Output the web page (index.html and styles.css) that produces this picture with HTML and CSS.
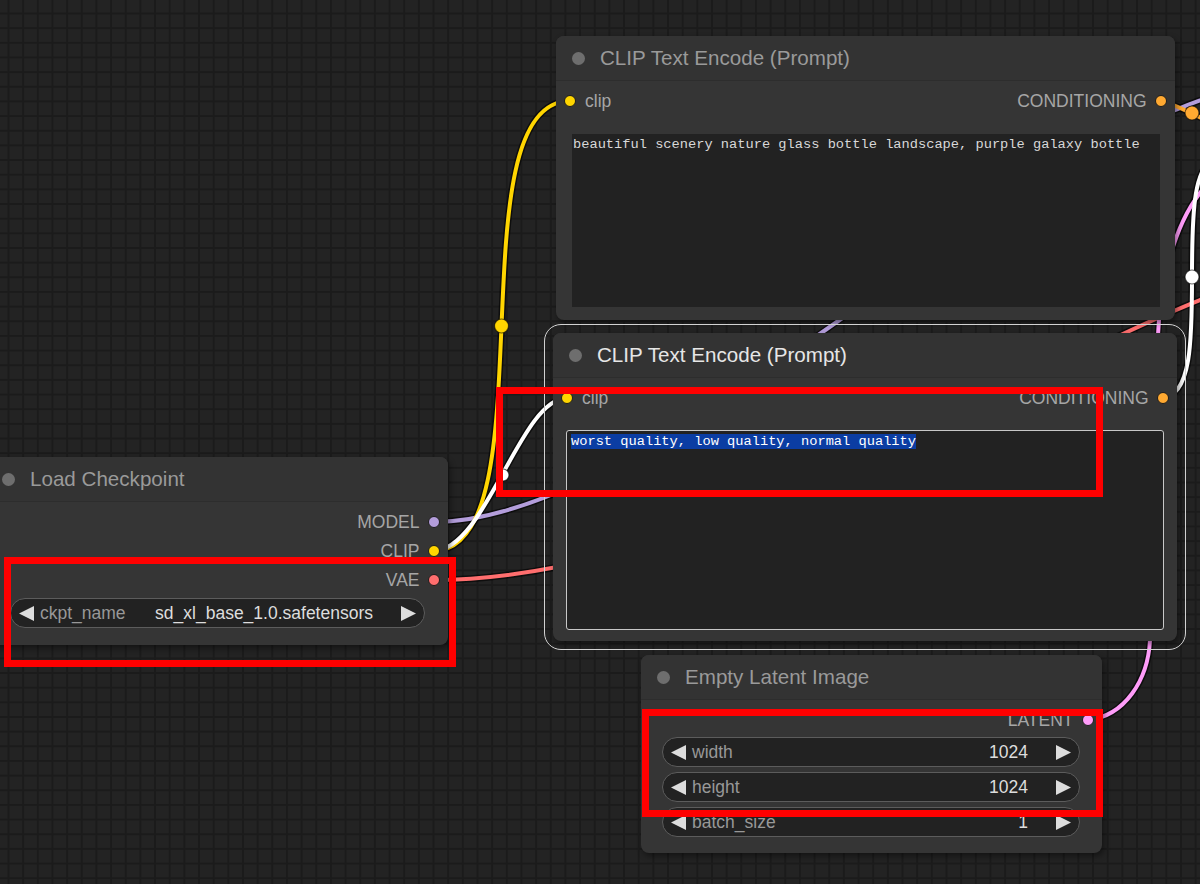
FILE: index.html
```html
<!DOCTYPE html>
<html>
<head>
<meta charset="utf-8">
<title>ComfyUI graph</title>
<link rel="stylesheet" href="styles.css">
</head>
<body>
<div class="canvas">
  <svg class="links" width="1200" height="884" viewBox="0 0 1200 884">
    <g class="link-border">
      <path d="M433,522 C676,522 1057,80 1300,80"/>
      <path d="M433,580 C700,580 1000,380 1200,300 L1260,276"/>
      <path d="M1088,720 C1125,716 1148,680 1150,640 L1158,335 C1160,280 1175,225 1200,193 S1225,165 1240,158"/>
      <path d="M1160,101 C1172,101 1212,126 1224,126"/>
      <path d="M433,551 C551,551 452,101 570,101"/>
      <path d="M433,551 C486,551 520,398 567,398"/>
      <path d="M1161,398 C1223,398 1161,156 1223,156"/>
    </g>
    <g class="link">
      <path stroke="#b39ddb" d="M433,522 C676,522 1057,80 1300,80"/>
      <path stroke="#ff6e6e" d="M433,580 C700,580 1000,380 1200,300 L1260,276"/>
      <path stroke="#ff9cf9" d="M1088,720 C1125,716 1148,680 1150,640 L1158,335 C1160,280 1175,225 1200,193 S1225,165 1240,158"/>
      <path stroke="#ffa931" d="M1160,101 C1172,101 1212,126 1224,126"/>
      <path stroke="#ffd500" d="M433,551 C551,551 452,101 570,101"/>
      <path stroke="#ffffff" d="M433,551 C486,551 520,398 567,398"/>
      <path stroke="#ffffff" d="M1161,398 C1223,398 1161,156 1223,156"/>
    </g>
    <g class="link-dots">
      <circle cx="1192" cy="113" r="7" fill="#ffa931"/>
      <circle cx="501.5" cy="326" r="7" fill="#ffd500"/>
      <circle cx="503" cy="475" r="6" fill="#ffffff"/>
      <circle cx="1192" cy="277" r="7" fill="#ffffff"/>
    </g>
  </svg>

  <div class="node node-prompt-pos">
    <div class="title"><span class="tdot"></span><span class="tname">CLIP Text Encode (Prompt)</span></div>
    <div class="body">
      <div class="slot-row">
        <div class="slot in"><i class="sdot c-clip"></i><span>clip</span></div>
        <div class="slot out"><span>CONDITIONING</span><i class="sdot c-cond"></i></div>
      </div>
      <div class="textarea ta-pos">beautiful scenery nature glass bottle landscape, purple galaxy bottle</div>
    </div>
  </div>

  <div class="node node-prompt-neg selected">
    <div class="title"><span class="tdot"></span><span class="tname">CLIP Text Encode (Prompt)</span></div>
    <div class="body">
      <div class="slot-row">
        <div class="slot in"><i class="sdot c-clip"></i><span>clip</span></div>
        <div class="slot out"><span>CONDITIONING</span><i class="sdot c-cond"></i></div>
      </div>
      <div class="textarea ta-neg focused"><span class="sel">worst quality, low quality, normal quality</span></div>
    </div>
  </div>

  <div class="node node-ckpt">
    <div class="title"><span class="tdot"></span><span class="tname">Load Checkpoint</span></div>
    <div class="body">
      <div class="slot-row end">
        <div class="slot out"><span>MODEL</span><i class="sdot c-model"></i></div>
      </div>
      <div class="slot-row end">
        <div class="slot out"><span>CLIP</span><i class="sdot c-clip"></i></div>
      </div>
      <div class="slot-row end">
        <div class="slot out"><span>VAE</span><i class="sdot c-vae"></i></div>
      </div>
      <div class="widgets">
        <div class="widget">
          <svg class="arrow" width="15" height="15" viewBox="0 0 15 15"><polygon points="0,7.5 15,0 15,15"/></svg>
          <span class="wlabel">ckpt_name</span>
          <span class="wvalue">sd_xl_base_1.0.safetensors</span>
          <svg class="arrow" width="15" height="15" viewBox="0 0 15 15"><polygon points="15,7.5 0,0 0,15"/></svg>
        </div>
      </div>
    </div>
  </div>

  <div class="node node-latent">
    <div class="title"><span class="tdot"></span><span class="tname">Empty Latent Image</span></div>
    <div class="body">
      <div class="slot-row end">
        <div class="slot out"><span>LATENT</span><i class="sdot c-latent"></i></div>
      </div>
      <div class="widgets">
        <div class="widget">
          <svg class="arrow" width="15" height="15" viewBox="0 0 15 15"><polygon points="0,7.5 15,0 15,15"/></svg>
          <span class="wlabel">width</span>
          <span class="wvalue">1024</span>
          <svg class="arrow" width="15" height="15" viewBox="0 0 15 15"><polygon points="15,7.5 0,0 0,15"/></svg>
        </div>
        <div class="widget">
          <svg class="arrow" width="15" height="15" viewBox="0 0 15 15"><polygon points="0,7.5 15,0 15,15"/></svg>
          <span class="wlabel">height</span>
          <span class="wvalue">1024</span>
          <svg class="arrow" width="15" height="15" viewBox="0 0 15 15"><polygon points="15,7.5 0,0 0,15"/></svg>
        </div>
        <div class="widget">
          <svg class="arrow" width="15" height="15" viewBox="0 0 15 15"><polygon points="0,7.5 15,0 15,15"/></svg>
          <span class="wlabel">batch_size</span>
          <span class="wvalue">1</span>
          <svg class="arrow" width="15" height="15" viewBox="0 0 15 15"><polygon points="15,7.5 0,0 0,15"/></svg>
        </div>
      </div>
    </div>
  </div>

  <div class="mark mark-prompt"></div>
  <div class="mark mark-ckpt"></div>
  <div class="mark mark-latent"></div>
</div>
</body>
</html>
```

FILE: styles.css
```css
* { box-sizing: border-box; }

html, body {
  margin: 0;
  padding: 0;
}

body {
  width: 1200px;
  height: 884px;
  overflow: hidden;
  background: #232323;
  font-family: "Liberation Sans", Arial, sans-serif;
}

.canvas {
  position: relative;
  width: 1200px;
  height: 884px;
  overflow: hidden;
  background-color: #232323;
  background-image:
    linear-gradient(to right, #1b1b1b 0, #1b1b1b 1.5px, transparent 1.5px),
    linear-gradient(to bottom, #1b1b1b 0, #1b1b1b 1.5px, transparent 1.5px);
  background-size: 14.667px 14.667px;
  background-position: 7.5px 12.5px;
}

/* links */
.links {
  position: absolute;
  left: 0;
  top: 0;
  z-index: 0;
}

.link-border path {
  fill: none;
  stroke: rgba(0, 0, 0, 0.6);
  stroke-width: 7;
}

.link path {
  fill: none;
  stroke-width: 4;
}

.link-dots circle {
  stroke: rgba(0, 0, 0, 0.6);
  stroke-width: 1.2;
}

/* nodes */
.node {
  position: absolute;
  z-index: 1;
  display: flex;
  flex-direction: column;
  background: #353535;
  border-radius: 8px;
  box-shadow: 2px 3px 6px rgba(0, 0, 0, 0.45);
}

.node-prompt-pos { left: 556px; top: 36px; width: 619px; height: 284px; }
.node-prompt-neg { left: 553px; top: 333px; width: 624px; height: 308px; }
.node-ckpt { left: -14px; top: 457px; width: 462px; height: 188px; }
.node-latent { left: 641px; top: 655px; width: 461px; height: 198px; }

.node.selected {
  outline: 1.8px solid #d2d2d2;
  outline-offset: 8px;
}

.title {
  flex: none;
  height: 45px;
  display: flex;
  align-items: center;
  padding-left: 15.5px;
  background: #333333;
  border-radius: 8px 8px 0 0;
  border-bottom: 1px solid #2d2d2d;
}

.tdot {
  flex: none;
  width: 13px;
  height: 13px;
  border-radius: 50%;
  background: #6e6e6e;
}

.tname {
  margin-left: 15.5px;
  font-size: 20.6px;
  color: #9a9a9a;
  white-space: nowrap;
}

.selected .tname { color: #e6e6e6; }

.body {
  flex: 1;
  display: flex;
  flex-direction: column;
  padding-top: 5.5px;
}

.slot-row {
  height: 29px;
  flex: none;
  display: flex;
  align-items: center;
  justify-content: space-between;
  padding: 0 8.5px 0 8px;
}

.slot-row.end { justify-content: flex-end; }

.slot {
  display: flex;
  align-items: center;
  font-size: 17.5px;
  color: #a6a6a6;
  white-space: nowrap;
}

.slot.in span { margin-left: 9px; }
.slot.out span { margin-right: 8px; }

.sdot {
  display: block;
  width: 12px;
  height: 12px;
  border-radius: 50%;
  border: 1px solid #1c1c1c;
}

.c-clip { background: #ffd500; }
.c-cond { background: #ffa931; }
.c-model { background: #b39ddb; }
.c-vae { background: #ff6e6e; }
.c-latent { background: #ff9cf9; }

/* text areas */
.textarea {
  flex: none;
  background: #222222;
  font-family: "Liberation Mono", "Courier New", monospace;
  font-size: 13.7px;
  line-height: 16px;
  color: #d8d8d8;
  white-space: pre-wrap;
  overflow: hidden;
}

.ta-pos {
  margin: 18.5px 15px 0 16px;
  height: 173px;
  padding: 3px 1px;
}

.ta-neg {
  margin: 17.5px 13px 0 13px;
  height: 200px;
  padding: 3px 4px;
}

.textarea.focused {
  border: 1.5px solid #c8c8c8;
  border-radius: 3px;
}

.sel {
  background: #0b3da3;
  color: #ffffff;
}

/* widgets */
.widgets {
  display: flex;
  flex-direction: column;
  gap: 5px;
}

.node-ckpt .widgets { margin: 3.5px 23px 0 24px; }
.node-latent .widgets { margin: 2.5px 22px 0 21px; }

.widget {
  height: 30px;
  display: flex;
  align-items: center;
  padding: 0 8px;
  background: #222222;
  border: 1px solid #5c5c5c;
  border-radius: 15px;
  font-size: 17.5px;
  white-space: nowrap;
}

.arrow {
  flex: none;
  fill: #dddddd;
}

.wlabel {
  flex: 1;
  margin-left: 6px;
  color: #989898;
}

.wvalue {
  margin-right: 28px;
  color: #dddddd;
}

/* red annotation frames */
.mark {
  position: absolute;
  z-index: 5;
  border: 7px solid #ff0000;
}

.mark-prompt { left: 496px; top: 387px; width: 607px; height: 110px; }
.mark-ckpt { left: 4px; top: 557px; width: 452px; height: 110px; }
.mark-latent { left: 642px; top: 709px; width: 461px; height: 108px; }
```
